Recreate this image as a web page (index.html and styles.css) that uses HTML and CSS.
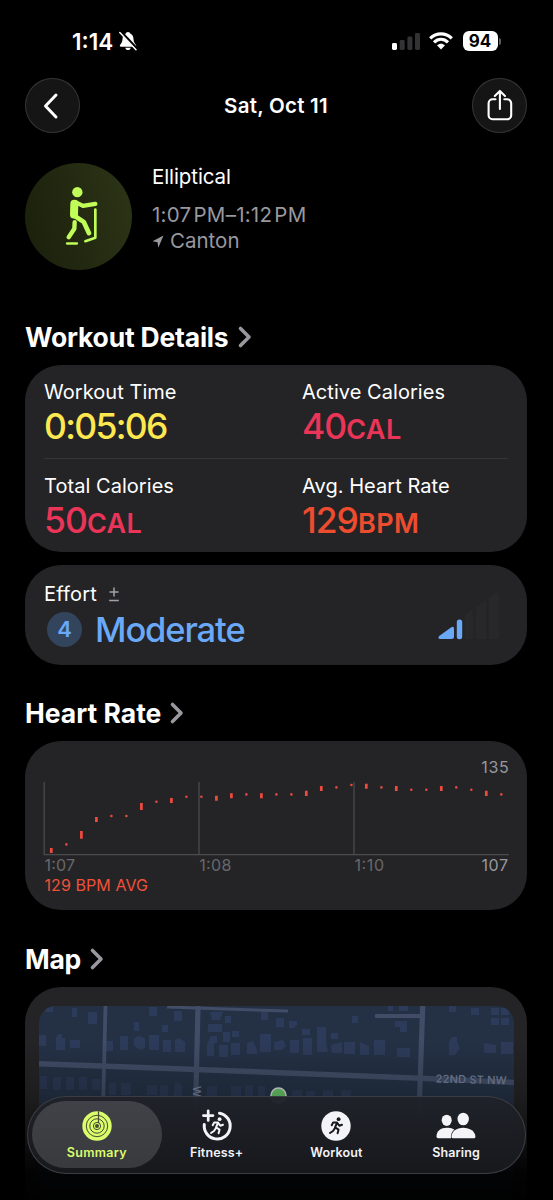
FILE: index.html
```html
<!DOCTYPE html>
<html lang="en">
<head>
<meta charset="utf-8">
<title>Workout Summary</title>
<link rel="stylesheet" href="styles.css">
</head>
<body>
<main class="screen">
  <header class="status">
    <div class="status-left">
      <span class="clock">1:14</span>
      <svg class="bell" viewBox="0 0 18 20">
        <path d="M9 1c-1.4 0-2 .8-2.2 1.6C4.400 3.500 3.600 5.600 3.500 8.200 3.400 11.500 2 12.600 1 14c-.5.900 0 1.700 1 1.700h14c1 0 1.500-.8 1-1.700-1-1.400-2.400-2.500-2.500-5.800-.1-2.600-.9-4.700-3.300-5.600C11 1.800 10.400 1 9 1zM6.300 16.800h5.400c-.3 1.500-1.300 2.300-2.700 2.300s-2.400-.8-2.700-2.300z" fill="#fff"/>
        <path d="M1.500 .5L18 18" stroke="#000" stroke-width="3"/>
        <path d="M.8 1.500L17 18.800" stroke="#fff" stroke-width="1.500" stroke-linecap="round"/>
      </svg>
    </div>
    <div class="status-right">
      <svg class="cell" viewBox="0 0 28 19">
        <rect x="0" y="11" width="5" height="7" rx="1.400" fill="#fff"/>
        <rect x="7.700" y="8" width="5" height="10" rx="1.400" fill="#333336"/>
        <rect x="15.400" y="4.500" width="5" height="13.500" rx="1.400" fill="#333336"/>
        <rect x="23" y="1" width="5" height="17" rx="1.400" fill="#333336"/>
      </svg>
      <svg class="wifi" viewBox="0 0 24 18">
        <g fill="none" stroke="#fff" stroke-width="3.200">
          <path d="M1.200 6.300C7.400.300 16.600.300 22.800 6.300"/>
          <path d="M5 10.400c4.200-4 9.800-4 14 0"/>
        </g>
        <path d="M8 13.300c2.400-2.100 5.600-2.100 8 0L12 17.500z" fill="#fff"/>
      </svg>
      <div class="battery"><span class="battery-level">94</span><i class="battery-cap"></i></div>
    </div>
  </header>

  <nav class="nav">
    <button class="round" aria-label="Back">
      <svg viewBox="0 0 55 55"><path d="M31 17L20.500 28l10.500 11" fill="none" stroke="#fff" stroke-width="3" stroke-linecap="round" stroke-linejoin="round"/></svg>
    </button>
    <h1 class="title">Sat, Oct 11</h1>
    <button class="round" aria-label="Share">
      <svg viewBox="-.5 0 55 55"><g fill="none" stroke="#fff" stroke-width="2.100" stroke-linecap="round" stroke-linejoin="round"><path d="M23 21.300h-2.900a4 4 0 0 0-4 4v12a4 4 0 0 0 4 4h14.600a4 4 0 0 0 4-4v-12a4 4 0 0 0-4-4h-2.900"/><path d="M27.400 31V13.200M22.300 18l5.100-5.100 5.100 5.100"/></g></svg>
    </button>
  </nav>

  <section class="profile">
    <div class="avatar">
      <svg viewBox="190 105 105 182" fill="none" stroke="#c0fd58" stroke-linecap="round" stroke-linejoin="round">
        <circle cx="230" cy="126" r="15.500" fill="#c0fd58" stroke="none"/>
        <path d="M221 161L220 193" stroke-width="24"/>
        <path d="M224 156L247 167 284 161" stroke-width="13"/>
        <path d="M220 196L249 215 265 249" stroke-width="14"/>
        <path d="M222 216L221 236 204 261" stroke-width="13"/>
        <path d="M284 178V263L254 273" stroke-width="8"/>
        <path d="M199 280H229" stroke-width="7"/>
      </svg>
    </div>
    <div class="profile-text">
      <div class="activity">Elliptical</div>
      <div class="muted time">1:07<span class="thin">&#8202;</span>PM–1:12<span class="thin">&#8202;</span>PM</div>
      <div class="muted place"><svg viewBox="0 0 12 13"><path d="M11.500.500L.500 6.300l5 .9.800 5.500z" fill="#98989f"/></svg><span>Canton</span></div>
    </div>
  </section>

  <h2 class="heading details-heading"><span>Workout Details</span><svg viewBox="0 0 14 22"><path d="M2.500 2.500L11 11 2.500 19.500"/></svg></h2>

  <section class="card metrics">
    <div class="metric"><div class="label">Workout Time</div><div class="value yellow">0:05:06</div></div>
    <div class="metric"><div class="label">Active Calories</div><div class="value pink">40<small>CAL</small></div></div>
    <div class="divider"></div>
    <div class="metric"><div class="label">Total Calories</div><div class="value pink">50<small>CAL</small></div></div>
    <div class="metric"><div class="label">Avg. Heart Rate</div><div class="value red">129<small>BPM</small></div></div>
  </section>

  <section class="card effort">
    <div>
      <div class="effort-label">Effort <svg viewBox="0 0 12 15"><path d="M6 .500v9M1.500 5h9M1.200 13.500h9.600" stroke="#a2a2a8" stroke-width="1.500" fill="none"/></svg></div>
      <div class="effort-row"><span class="badge">4</span><span class="level">Moderate</span></div>
    </div>
    <svg class="effort-bars" viewBox="0 0 64 50">
      <path d="M.5 47.200Q0 46 1.500 44.800L13 36.500Q16 34.500 16 38V45.500Q16 48 13.500 48H2Q.900 48 .5 47.200z" fill="#6aa9f8"/>
      <rect x="18.800" y="28.500" width="5.400" height="19.800" rx="2.500" fill="#6aa9f8"/>
      <path d="M27 24L35 18V48H27zM38 16L48 9V48H38zM51 7L59 1.500Q61 .500 61 3V46Q61 48 59 48H51z" fill="#28282b"/>
    </svg>
  </section>

  <h2 class="heading heart-heading"><span>Heart Rate</span><svg viewBox="0 0 14 22"><path d="M2.500 2.500L11 11 2.500 19.500"/></svg></h2>

  <section class="card heart">
    <svg class="chart" viewBox="44 755 465 145">
      <path d="M44.200 782V854.700H509M199 782V854M354 782V854" fill="none" stroke="#4b4b4e" stroke-width="1.300"/>
      <g stroke="#ef4b3f" stroke-width="2.700">
        <path d="M51.300 848v5M81.400 831v7.700M96.400 817v5M141.400 803v7M171.400 798v5M216.400 795.700v5M231.400 793.300v5M261.400 793.300v5M306.300 790.700v5.200M321.300 786v5M366.300 783.700v5M396.300 786v5M441.300 786v5M486.300 790.700v5.200"/>
      </g>
      <g stroke="#e04a40" stroke-width="2.600" stroke-linecap="round">
        <path d="M66.400 844.400h.01M111.400 816h.01M126.400 816h.01M156.400 801.700h.01M186.400 796.800h.01M201.400 796.800h.01M246.400 794.400h.01M276.400 794.400h.01M291.400 794.400h.01M336.400 787.400h.01M351.400 785h.01M381.400 787.400h.01M411.300 789.700h.01M426.300 789.700h.01M456.300 787.400h.01M471.300 789.700h.01M501.300 794.400h.01"/>
      </g>
      <g class="chart-text">
        <text x="44.500" y="871" textLength="30.500" fill="#68686b">1:07</text>
        <text x="199.300" y="871" textLength="32" fill="#68686b">1:08</text>
        <text x="354.500" y="871" textLength="29.500" fill="#68686b">1:10</text>
        <text x="481.200" y="772.500" textLength="27.500" fill="#98989f">135</text>
        <text x="481.500" y="871" textLength="26.500" fill="#98989f">107</text>
        <text x="44.500" y="890.500" textLength="103.500" fill="#ef5138">129 BPM AVG</text>
      </g>
    </svg>
  </section>

  <h2 class="heading map-heading"><span>Map</span><svg viewBox="0 0 14 22"><path d="M2.500 2.500L11 11 2.500 19.500"/></svg></h2>

  <section class="card map-card">
    <svg class="map" viewBox="39 1006 475 194">
      <rect x="39" y="1006" width="475" height="194" fill="#243145"/>
      <g fill="#2d3b5a">
        <path d="M45 1006h8v6h-8zM72 1008h5v9h-5zM88 1012h9v12h-9zM149 1007h8v9h-8zM174 1011h8v10h-8zM134 1022h5v9h-5zM162 1025h6v7h-6z"/>
        <path d="M39 1035h7v11h-7zM56 1038l2-4h4v4h3v12h-9zM70 1040h10v8h-10zM106 1041h7v10h-7zM120 1036h8v14h-8zM134 1039l4-3 7 2v10l-5 2-6-4zM149 1035h10v15h-10zM163 1040h8v12h-8zM175 1040l4-2 6 4v10h-10z"/>
        <path d="M210 1012h13l-3 8h-8zM225 1016h6v7h-6zM208 1024h14v8h-14zM211 1036h6v7h-3v13h-7v-12zM223 1032h7v10h-7zM232 1031h7v6h-7zM219 1045h9v12h-9zM231 1043h9v12h-9zM247 1043l6-2 4 9v4h-10zM260 1034h11v18h-11zM261 1012h7v8h-7z"/>
        <path d="M276 1018h8v9h-8zM289 1021h8v4l-3 3h-5zM302 1029h8v6h-8zM317 1027h9v15l2 10h-11zM331 1033h7v6h-7zM352 1016h6v7h-6zM395 1021h12v11h-7v-5h-5zM388 1006h5v5h-5zM399 1006h9v5h-9zM449 1006h7v6h-7zM471 1008h8v7h-8zM491 1008h8v7h-8zM501 1008h8v7h-8zM491 1018h8v7h-8zM501 1018h8v7h-8z"/>
        <path d="M274 1042l9-2 3 6-4 4h-8zM290 1040h9v13h-9zM303 1038h9v17h-9zM331 1045l7-2 4-1v11h-10zM344 1042h11v12h-11zM360 1042l9 4v9h-9zM374 1040h11v15h-11zM397 1048h13v9h-13zM449 1042l3-5h5v5l3 6-5 7h-6zM484 1043l12 2v8h-12zM501 1042h12v12h-12z"/>
        <path opacity=".75" d="M40 1076h7v13h-7zM53 1077h8v13h-8zM66 1077h8v13h-8zM79 1077h8v13h-8zM92 1079h8v11h-8zM109 1083h7v12h-7zM121 1083h10v12h-10zM147 1085h10v10h-10zM160 1085h8v12h-8zM175 1081l7 4v12h-9zM207 1086h10v12h-10zM231 1086h10v10h-10zM245 1085h8v12h-8zM258 1086h7v11h-7zM292 1090h10v9h-10zM306 1091h9v9h-9zM323 1090h10v9h-10zM341 1090h10v9h-10z"/>
      </g>
      <g fill="none" stroke="#414d67">
        <path d="M39 1063.700L196 1069.500 420 1078.300 514 1082.500" stroke-width="5.500"/>
        <path d="M105.500 1006L103 1108" stroke-width="3.800"/>
        <path d="M198 1006L195.500 1110" stroke-width="5.200"/>
        <path d="M422.700 1006L419 1115" stroke-width="5.200"/>
        <path d="M167 1007L288 1011" stroke-width="3"/>
        <path d="M375 1016H420" stroke-width="4"/>
      </g>
      <text class="street" x="435.500" y="1082.500" textLength="71" transform="rotate(1.500 435 1082)">22ND ST NW</text>
      <text class="street" x="190" y="1087" transform="rotate(90 192 1088)">W</text>
      <circle cx="278.500" cy="1095.500" r="7.500" fill="#65c466" stroke="#d6d8dc" stroke-width="1.600"/>
    </svg>
  </section>

  <div class="fade"></div>

  <nav class="tabs">
    <div class="pill"></div>
    <a class="tab active">
      <svg viewBox="-15 -15 30 30"><circle r="14.700" fill="#dbfc6b"/><g fill="none" stroke="#454a30" stroke-width="1"><circle r="10.700"/><circle r="7.200"/><circle r="3.600"/><path d="M1.500-14.700V-3" stroke-width="1.200"/></g><circle r="2" fill="#454a30"/></svg>
      <span class="tab-label">Summary</span>
    </a>
    <a class="tab">
      <svg viewBox="-15 -15 30 30"><g fill="none" stroke="#f3f3f8"><path d="M2.500-12.800A13 13 0 1 1-12.700-1.500" stroke-width="3" stroke-linecap="round"/><path d="M-8.800-15.200V-5.600M-13.600-10.400H-4" stroke-width="2.700" stroke-linecap="round"/></g>
        <g class="runner light"><circle cx="2.600" cy="-6.800" r="1.900"/><path d="M-4.300-.8L-2.800-3.600 1-3.500 3.300-.2 6-1.200M1-3L-1 1.400 2.600 3.600 1.600 7.300M-1 2L-3 5-6 7"/></g></svg>
      <span class="tab-label">Fitness+</span>
    </a>
    <a class="tab">
      <svg viewBox="-15 -15 30 30"><circle r="14.700" fill="#f3f3f8"/>
        <g class="runner dark"><circle cx="2.600" cy="-6.800" r="1.900"/><path d="M-4.300-.8L-2.800-3.600 1-3.500 3.300-.2 6-1.200M1-3L-1 1.400 2.600 3.600 1.600 7.300M-1 2L-3 5-6 7"/></g></svg>
      <span class="tab-label">Workout</span>
    </a>
    <a class="tab">
      <svg class="people" viewBox="-20 -15 40 30" fill="#f3f3f8"><ellipse cx="-9.300" cy="-5.700" rx="5" ry="5.600"/><path d="M-19.500 10.500C-19.500 5-15 1.700-9.500 1.700S-1.500 3-.5 5L-3 12.300H-18Q-19.500 12.300-19.500 10.500z"/><path d="M-5 12.900C-6 5 0 .6 7.200.6S20.500 5 20.300 12.900z" fill="#1b1c21"/><ellipse cx="7.200" cy="-7" rx="5.700" ry="6.300"/><path d="M-4.500 10.700C-4.500 5.500.500 1.700 7.200 1.700S19.400 5.500 19.400 10.700Q19.400 12.300 18 12.300H-3Q-4.500 12.300-4.500 10.700z"/></svg>
      <span class="tab-label">Sharing</span>
    </a>
  </nav>
</main>
</body>
</html>
```

FILE: styles.css
```css
* { box-sizing: border-box; }
body { margin: 0; background: #000; color: #fff; font-family: Inter, "Liberation Sans", sans-serif; }
svg { display: block; overflow: visible; }
.screen { position: relative; width: 553px; height: 1200px; overflow: hidden; background: #000; padding: 0 26px 0 25px; }

.status { height: 78px; padding: 28px 26px 0 47px; display: flex; justify-content: space-between; align-items: flex-start; }
.status-left, .status-right { display: flex; align-items: center; height: 26px; }
.clock { font-size: 22.500px; font-weight: 600; letter-spacing: 0; }
.bell { width: 18px; height: 20px; margin-left: 6px; }
.cell { width: 28px; height: 19px; }
.wifi { width: 24px; height: 18px; margin-left: 9px; }
.battery { display: flex; align-items: center; gap: 1px; margin-left: 10px; }
.battery-level { width: 35px; height: 19.500px; border-radius: 6px; background: #fff; color: #000; font-size: 17px; line-height: 20px; font-weight: 700; text-align: center; }
.battery-cap { width: 2.500px; height: 7px; border-radius: 0 3px 3px 0; background: #5c5c60; }

.nav { height: 55px; display: flex; justify-content: space-between; align-items: center; }
.round { width: 55px; height: 55px; padding: 0; border: 0; border-radius: 50%; background: #151516; box-shadow: inset 0 0 0 1px #343436; }
.round svg { width: 55px; height: 55px; }
.title { margin: 0; font-size: 20.500px; font-weight: 600; letter-spacing: .25px; }

.profile { margin-top: 30px; display: flex; gap: 20px; height: 107px; }
.avatar { width: 107px; height: 107px; border-radius: 50%; background: linear-gradient(75deg, #1a1f0b, #2d3517); display: flex; align-items: center; justify-content: center; }
.avatar svg { width: 35px; height: 61px; margin: -2px 0 0 5px; }
.activity { height: 26px; line-height: 27px; font-size: 20.500px; letter-spacing: -0.1px; }
.muted { color: #98989f; font-size: 20.500px; height: 26px; line-height: 26px; }
.time { margin-top: 13px; letter-spacing: .25px; white-space: nowrap; }
.place { display: flex; align-items: center; gap: 6px; }
.place svg { width: 12px; height: 13px; }

.heading { display: flex; align-items: center; gap: 9px; margin: 0; height: 32px; line-height: 32px; font-size: 26.500px; font-weight: 700; letter-spacing: -0.2px; white-space: nowrap; }
.heading svg { width: 14px; height: 22px; fill: none; stroke: #98989f; stroke-width: 3.600; stroke-linecap: round; stroke-linejoin: round; }
.details-heading { margin-top: 51px; }
.heart-heading { margin-top: 32px; letter-spacing: 0; }
.map-heading { margin-top: 33px; letter-spacing: -0.3px; }

.card { background: #242426; border-radius: 36px; }
.metrics { margin-top: 12px; height: 187px; padding: 0 19px; display: grid; grid-template-columns: 258px 1fr; grid-template-rows: 93px 1px 93px; }
.divider { grid-column: 1 / -1; background: #353537; }
.label { margin-top: 14px; height: 26px; line-height: 27px; font-size: 20px; letter-spacing: 0.050px; }
.value { height: 44px; line-height: 43px; font-size: 35.500px; font-weight: 500; letter-spacing: -1px; }
.value.yellow { letter-spacing: -1.700px; }
.value small { font-size: 27px; font-weight: 600; letter-spacing: .4px; }
.yellow { color: #ffe84f; }
.pink { color: #ea3558; }
.red { color: #ed4c2f; }

.effort { margin-top: 13px; height: 100px; padding: 16px 25px 0 19px; display: flex; justify-content: space-between; }
.effort-label { display: flex; align-items: center; gap: 11px; height: 26px; line-height: 26px; font-size: 20px; letter-spacing: .2px; }
.effort-label svg { width: 12px; height: 15px; }
.effort-row { display: flex; align-items: center; height: 44px; margin-left: 3px; gap: 13px; }
.badge { width: 35px; height: 35px; border-radius: 50%; background: #33455d; color: #6aa9f8; font-size: 22px; font-weight: 600; line-height: 35px; text-align: center; }
.level { color: #6aa9f8; font-size: 34.500px; font-weight: 500; letter-spacing: -1.100px; }
.effort-bars { width: 64px; height: 50px; margin-top: 10px; }

.heart { margin-top: 12px; height: 169px; padding: 14px 18px 0 19px; }
.chart { width: 465px; height: 145px; }
.chart-text { font-size: 16px; }

.map-card { margin-top: 12px; height: 260px; padding: 19px 13px 0 14px; }
.map { width: 475px; height: 194px; border-radius: 17px 17px 0 0; overflow: hidden; }
.street { fill: #76819a; font-size: 11px; font-weight: 500; }

.fade { position: absolute; left: 0; right: 0; bottom: 0; height: 160px; background: linear-gradient(rgba(0,0,0,0), rgba(0,0,0,.2) 35%, rgba(0,0,0,.45) 55%, rgba(0,0,0,.92) 83%, rgba(0,0,0,.97)); }

.tabs { position: absolute; left: 27px; top: 1096px; width: 499px; height: 78px; padding: 0 10px; display: flex; border-radius: 39px; background: linear-gradient(rgba(31,34,41,.95), rgba(24,25,29,.97)); box-shadow: inset 0 0 0 1px #3b3d42; }
.pill { position: absolute; left: 5px; top: 5px; width: 130px; height: 67px; border-radius: 34px; background: linear-gradient(#404247, #393a3e); }
.tab { position: relative; flex: 1; display: flex; flex-direction: column; align-items: center; padding-top: 15px; color: #f3f3f8; }
.tab svg { width: 30px; height: 30px; }
.tab .people { width: 40px; }
.tab-label { margin-top: 4px; font-size: 12.500px; line-height: 16px; font-weight: 600; letter-spacing: .15px; }
.active .tab-label { letter-spacing: .3px; }
.active { color: #dbfc6b; }
.runner path { fill: none; stroke-width: 2; stroke-linecap: round; stroke-linejoin: round; }
.light { fill: #f3f3f8; stroke: #f3f3f8; }
.dark { fill: #17181c; stroke: #17181c; }
.runner circle { stroke: none; }
```
